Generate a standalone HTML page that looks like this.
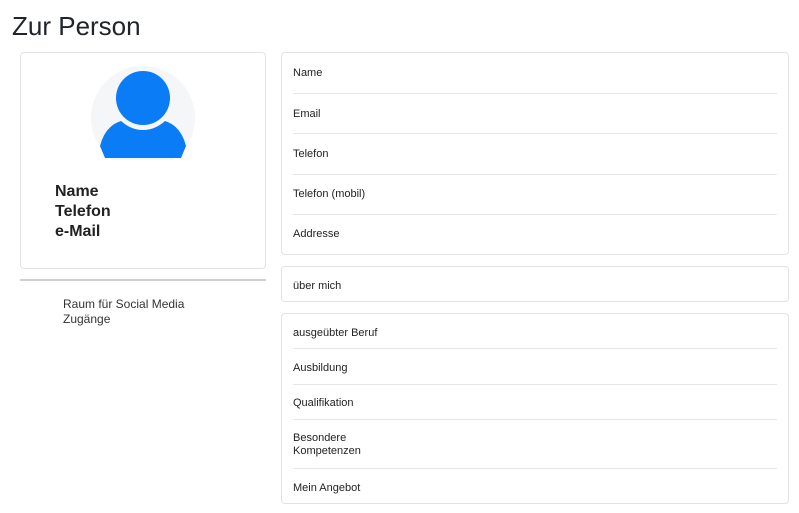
<!DOCTYPE html>
<html><head><meta charset="utf-8"><style>
body{margin:0;width:799px;height:513px;background:#fff;font-family:"Liberation Sans",sans-serif;color:#212529;position:relative;overflow:hidden}
.a{position:absolute}
.card{position:absolute;border:1px solid #e3e3e3;border-radius:4px;background:#fff;box-sizing:border-box}
.t{position:absolute;left:11px;font-size:11px;line-height:14px;color:#222}
.sep{position:absolute;left:11px;right:11px;height:1px;background:#e6e6e6}
</style></head><body>
<div class="a" style="left:12px;top:9px;font-size:26px;line-height:34px;color:#212529">Zur Person</div>

<div class="card" style="left:20px;top:52px;width:246px;height:217px">
<svg class="a" style="left:70px;top:13px" width="104" height="94" viewBox="0 0 104 94">
<circle cx="52" cy="52" r="52" fill="#f4f6f8"/>
<circle cx="52" cy="32" r="27" fill="#0a7cf5"/>
<path d="M14 92 L9 80 Q14 60 30 55 Q40 64 52 64 Q64 64 74 55 Q90 60 95 80 L90 92 Z" fill="#0a7cf5"/>
</svg>
<div class="a" style="left:34px;top:129px;font-size:16px;line-height:20px;font-weight:bold;color:#222">Name<br>Telefon<br>e-Mail</div>
</div>
<div class="a" style="left:20px;top:279px;width:246px;height:2px;background:#cfcfcf"></div>
<div class="a" style="left:63px;top:297px;font-size:12px;line-height:15px;color:#333">Raum für Social Media<br>Zugänge</div>

<div class="card" style="left:281px;top:52px;width:508px;height:203px">
<div class="t" style="top:13px">Name</div><div class="sep" style="top:40px"></div>
<div class="t" style="top:54px">Email</div><div class="sep" style="top:80px"></div>
<div class="t" style="top:94px">Telefon</div><div class="sep" style="top:121px"></div>
<div class="t" style="top:134px">Telefon (mobil)</div><div class="sep" style="top:161px"></div>
<div class="t" style="top:174px">Addresse</div>
</div>

<div class="card" style="left:281px;top:266px;width:508px;height:36px">
<div class="t" style="top:12px">über mich</div>
</div>

<div class="card" style="left:281px;top:313px;width:508px;height:191px">
<div class="t" style="top:12px">ausgeübter Beruf</div><div class="sep" style="top:34px"></div>
<div class="t" style="top:47px">Ausbildung</div><div class="sep" style="top:70px"></div>
<div class="t" style="top:82px">Qualifikation</div><div class="sep" style="top:105px"></div>
<div class="t" style="top:118px;line-height:13px">Besondere<br>Kompetenzen</div><div class="sep" style="top:154px"></div>
<div class="t" style="top:167px">Mein Angebot</div>
</div>
</body></html>
